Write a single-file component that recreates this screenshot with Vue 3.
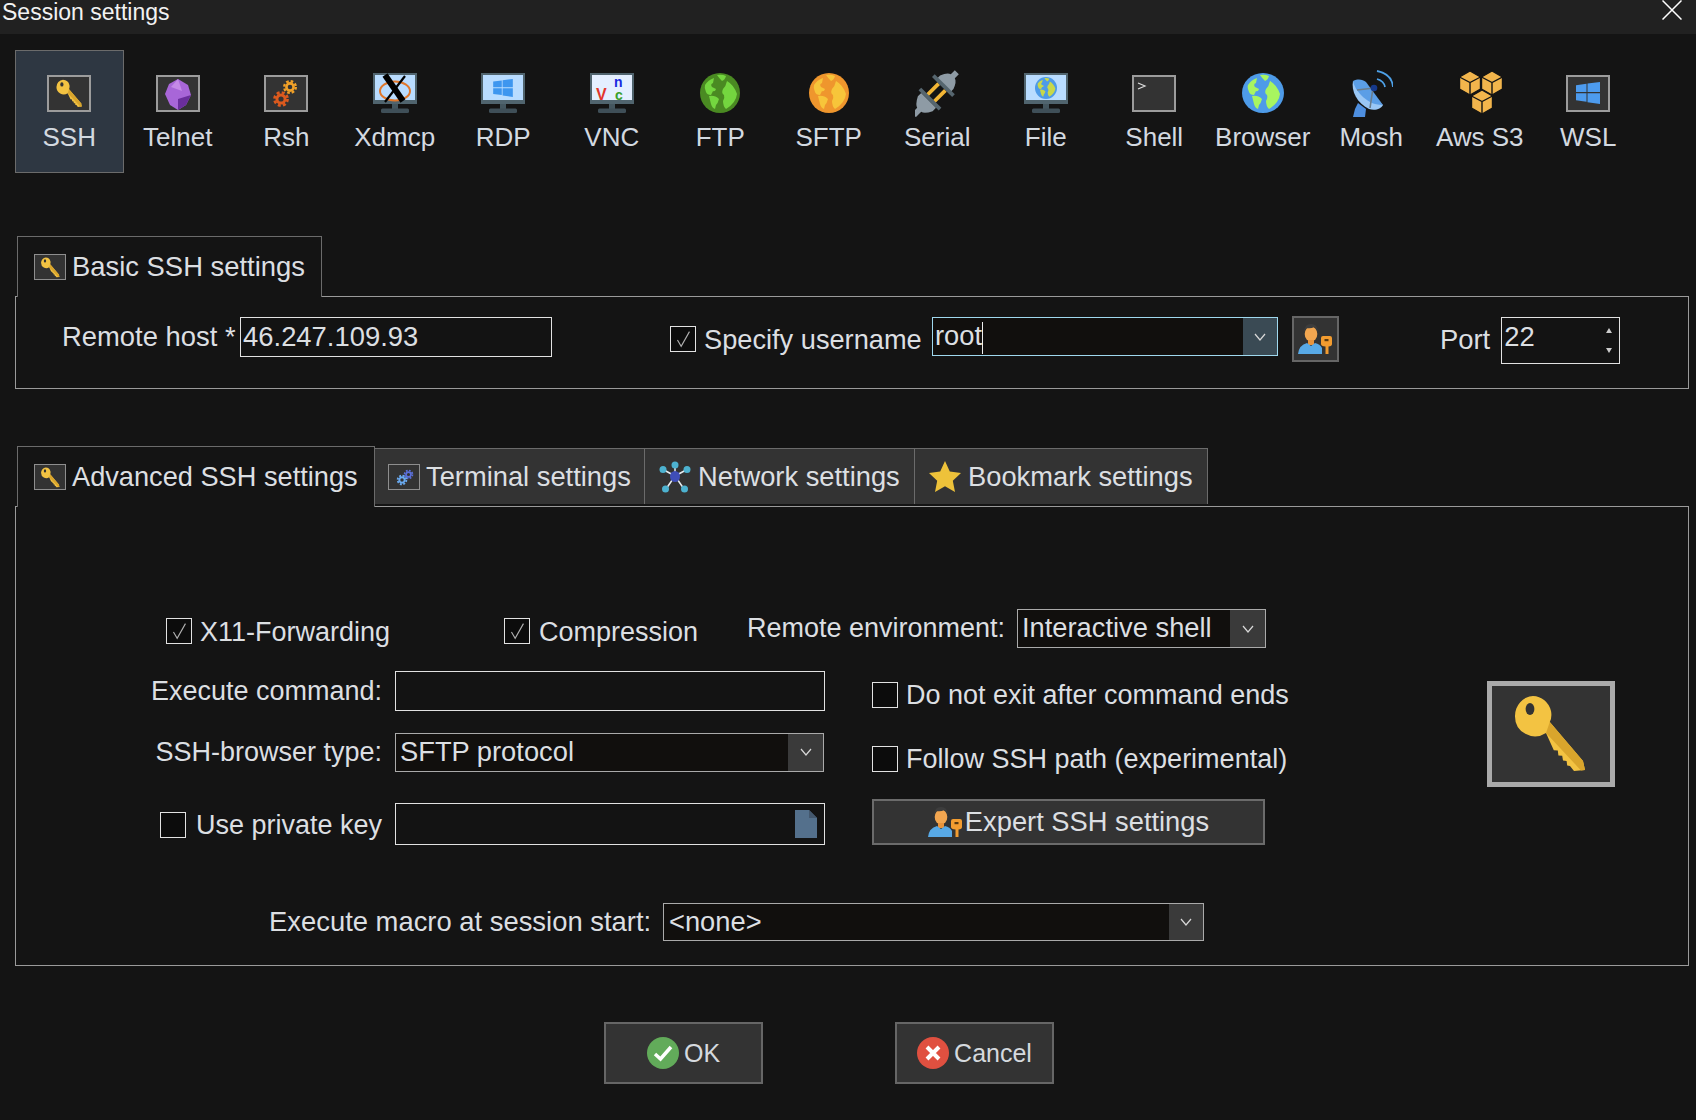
<script setup>
const tiles = [
  { label: 'SSH', icon: 'ssh', active: true },
  { label: 'Telnet', icon: 'telnet' },
  { label: 'Rsh', icon: 'rsh' },
  { label: 'Xdmcp', icon: 'xdmcp' },
  { label: 'RDP', icon: 'rdp' },
  { label: 'VNC', icon: 'vnc' },
  { label: 'FTP', icon: 'ftp' },
  { label: 'SFTP', icon: 'sftp' },
  { label: 'Serial', icon: 'serial' },
  { label: 'File', icon: 'file' },
  { label: 'Shell', icon: 'shell' },
  { label: 'Browser', icon: 'browser' },
  { label: 'Mosh', icon: 'mosh' },
  { label: 'Aws S3', icon: 'aws' },
  { label: 'WSL', icon: 'wsl' }
]
</script>

<template>
  <div class="dialog">
    <!-- shared icon sprites -->
    <svg class="sprite" xmlns="http://www.w3.org/2000/svg">
      <defs>
        <symbol id="key" viewBox="0 0 40 40">
          <path fill="#f3c342" d="M11 1a9.5 10 0 0 1 9 7.5q.6 3-.6 5.5L36 33.5 37 38l-5.5.5-2-2.5-1.4-.2-.3-2.3-1.8-.2-.4-2.4-1.9-.2-.3-2.4-2-.2L17.5 19.500A10 10 0 0 1 2 11 9.5 10 0 0 1 11 1z" />
          <path fill="#d9a52c" d="M19.4 14 36 33.5 37 38l-2 .2L17.5 19.5z" />
          <ellipse cx="9.5" cy="7.5" rx="2.2" ry="3" fill="#333" />
        </symbol>
        <symbol id="person-key" viewBox="0 0 34 30">
          <ellipse cx="13" cy="10" rx="6.3" ry="7.5" fill="#f2a650" />
          <path fill="#3d3d3d" d="M6.500 8Q6 0 13 0q7 0 6.500 8-1-4-3-5-4 2-8 1-1.500 1-2 4z" />
          <path fill="#e8943c" d="M10 16h6v5h-6z" />
          <path fill="#58a9e6" d="M0 30q1-9 9-11l4 3 4-3q5 1 7 5v6z" />
          <path fill="#f29c30" d="M23 14q0-2 2-2h7q2 0 2 2v6q0 2-3.500 2.500V30h-3v-7.500Q23 22 23 20z" />
          <rect x="26.500" y="15" width="4" height="2.200" fill="#5a3a10" />
        </symbol>
        <symbol id="land" viewBox="0 0 40 40">
          <path fill="currentColor" d="M27 8q7 4 10 13-1 9-11 15-3-3-3-8 2-3 1-6-3-2-1-6 3-3 4-8zM17 2q5-1 9 1-1 4-4 5-3-3-5-6zM5 12q3-5 9-7l-1 5q-3 1-1 4l4 2q-1 3-3 2l-2 4q-4 0-5-3-2-4-1-7zM9 23q6-1 10 3-1 4-3 6l-1 4q-3-1-4-5z" />
        </symbol>
        <symbol id="win" viewBox="0 0 24 22">
          <path fill="currentColor" d="M0 3.200 10.500 1.700V10H0zM11.500 1.500 24 0v10H11.500zM0 11.200h10.500v8.500L0 18.300zM11.500 11.200H24V22l-12.500-1.700z" />
        </symbol>
        <symbol id="gear" viewBox="-8 -8 16 16">
          <circle r="3.600" fill="none" stroke="currentColor" stroke-width="2.600" />
          <circle r="5.800" fill="none" stroke="currentColor" stroke-width="2.400" stroke-dasharray="2.600 1.950" />
        </symbol>
        <symbol id="cube" viewBox="-12 -13 24 26">
          <path fill="#f2b54c" stroke="#141414" stroke-width="1.400" stroke-linejoin="round" d="M0-12 10.500-6V6L0 12-10.500 6V-6z" />
          <path fill="none" stroke="#141414" stroke-width="1.400" d="M-10.500-6 0-.5 10.500-6M0-.5V12" />
        </symbol>
        <symbol id="monitor" viewBox="0 0 44 40">
          <rect x="1" y="1" width="42" height="29" fill="#b9dcff" stroke="#50646e" stroke-width="2" />
          <rect x="0" y="27" width="44" height="4" fill="#50646e" />
          <rect x="19" y="31" width="6" height="5" fill="#44565f" />
          <rect x="8" y="35.500" width="28" height="4.500" rx="1.500" fill="#3f4f58" />
        </symbol>
        <symbol id="frame" viewBox="0 0 44 40">
          <rect x="1" y="3" width="42" height="35" fill="#333" stroke="#9c9c9c" stroke-width="2" />
        </symbol>

        <symbol id="i-ssh" viewBox="0 -4 44 48">
          <use href="#frame" width="44" height="40" />
          <use href="#key" x="8" y="6" width="29" height="29" />
        </symbol>
        <symbol id="i-telnet" viewBox="0 -4 44 48">
          <use href="#frame" width="44" height="40" />
          <path fill="#a866d8" d="M22 6l10 6 3 10-5 10-8 5-8-5-5-11 4-10z" />
          <path fill="#6a2e9c" d="M22 26l13-4-5 10-8 5z" />
          <path fill="#c58ae8" d="M22 6l4 12-11-4z" />
        </symbol>
        <symbol id="i-rsh" viewBox="0 -4 44 48">
          <use href="#frame" width="44" height="40" />
          <use href="#gear" x="18" y="6" width="16" height="16" color="#f0a028" />
          <use href="#gear" x="8" y="17" width="18" height="18" color="#dc5a1e" />
        </symbol>
        <symbol id="i-xdmcp" viewBox="0 -4 44 48">
          <use href="#monitor" width="44" height="40" />
          <ellipse cx="22" cy="18" rx="15" ry="9.500" fill="none" stroke="#e0762a" stroke-width="2" />
          <path stroke="#000" stroke-width="6" d="M12 2 30 28" />
          <path stroke="#000" stroke-width="2.200" d="M32 3 12 29" />
        </symbol>
        <symbol id="i-rdp" viewBox="0 -4 44 48">
          <use href="#monitor" width="44" height="40" />
          <use href="#win" x="12" y="6" width="20" height="18" color="#3e96ef" />
        </symbol>
        <symbol id="i-vnc" viewBox="0 -4 44 48">
          <use href="#monitor" width="44" height="40" />
          <rect x="2" y="2" width="40" height="25" fill="#e4efff" />
          <text x="6" y="27" font-family="Liberation Sans, sans-serif" font-weight="700" font-size="16" fill="#e2352c">V</text>
          <text x="24" y="14" font-family="Liberation Sans, sans-serif" font-weight="700" font-size="14" fill="#1a2ae0">n</text>
          <text x="25" y="27" font-family="Liberation Sans, sans-serif" font-weight="700" font-size="14" fill="#3aa02c">c</text>
        </symbol>
        <symbol id="i-ftp" viewBox="0 -4 44 48">
          <ellipse cx="22" cy="20" rx="20" ry="20" fill="#4a8a22" />
          <use href="#land" x="2" y="0" width="40" height="40" color="#74d63f" />
        </symbol>
        <symbol id="i-sftp" viewBox="0 -4 44 48">
          <ellipse cx="22" cy="20" rx="20" ry="20" fill="#ef962d" />
          <use href="#land" x="2" y="0" width="40" height="40" color="#f7c53a" />
        </symbol>
        <symbol id="i-serial" viewBox="0 -4 44 48">
          <g transform="translate(21 20) rotate(45) scale(.95)">
            <path fill="#f2b535" d="M-7-9h4V8h-4zM3-9h4V8H3z" />
            <path fill="#8e9ba5" d="M-10-12v-4q3-8 7-9v-6h6v6q4 1 7 9v4z" />
            <rect x="-15" y="-13" width="30" height="4" fill="#56666f" />
            <path fill="#8e9ba5" d="M-11 11v5q4 8 8 9v8h6v-8q4-1 8-9v-5z" />
            <rect x="-15" y="7" width="30" height="4" fill="#56666f" />
          </g>
        </symbol>
        <symbol id="i-file" viewBox="0 -4 44 48">
          <use href="#monitor" width="44" height="40" />
          <circle cx="22" cy="15" r="11" fill="#4e9be8" />
          <use href="#land" x="11" y="4" width="22" height="22" color="#c8d84a" />
        </symbol>
        <symbol id="i-shell" viewBox="0 -4 44 48">
          <use href="#frame" width="44" height="40" />
          <path fill="none" stroke="#ddd" stroke-width="1.200" d="M6 10l7 3-7 3" />
        </symbol>
        <symbol id="i-browser" viewBox="0 -4 44 48">
          <ellipse cx="22" cy="20" rx="21" ry="20" fill="#4e9be8" />
          <use href="#land" x="1" y="0" width="42" height="40" color="#a8f560" />
        </symbol>
        <symbol id="i-mosh" viewBox="0 -4 44 48">
          <path fill="#4e8fe0" d="M9 30l8 6-1 8H4l2-8z" />
          <path fill="#9ac7f5" d="M4 8C2 18 8 30 20 36c6 2 12 0 14-4z" />
          <path fill="#5b9ee6" d="M4 8c6-3 10-1 13 1l17 23c-10 0-16-4-22-10-4-4-7-9-8-14z" />
          <path fill="none" stroke="#6b7d8c" stroke-width="1.600" d="M8 17 25 15M24 15 21 35" />
          <circle cx="25" cy="15" r="3.300" fill="#16398c" />
          <path fill="none" stroke="#4ea1e8" stroke-width="1.800" d="M28 6q7 2 8 8M28-2q15 3 16 16" />
        </symbol>
        <symbol id="i-aws" viewBox="0 -4 44 48">
          <use href="#cube" x="0" y="-3" width="24" height="26" />
          <use href="#cube" x="22" y="-3" width="24" height="26" />
          <use href="#cube" x="12" y="16" width="24" height="26" />
        </symbol>
        <symbol id="i-wsl" viewBox="0 -4 44 48">
          <use href="#frame" width="44" height="40" />
          <use href="#win" x="10" y="9" width="24" height="22" color="#4d9bee" />
        </symbol>
      </defs>
    </svg>

    <div class="titlebar">
      <span class="title">Session settings</span>
      <svg class="close" viewBox="0 0 20 20" width="20" height="20">
        <path d="M.5.500 19.500 19.500M19.500.500.500 19.500" stroke="#fff" stroke-width="1.500" />
      </svg>
    </div>

    <div class="tiles">
      <div v-for="t in tiles" :key="t.label" :class="['tile', { active: t.active }]">
        <svg class="tile-icon" width="44" height="48"><use :href="'#i-' + t.icon" width="44" height="48" /></svg>
        <span>{{ t.label }}</span>
      </div>
    </div>

    <div class="tabs basic-tabs">
      <div class="tab selected">
        <span class="tab-frame"><svg width="21" height="21"><use href="#key" width="21" height="21" /></svg></span>
        Basic SSH settings
      </div>
    </div>
    <div class="panel basic-panel">
      <label class="lbl host-lbl">Remote host *</label>
      <input class="field host" value="46.247.109.93" />
      <span class="check user-check"><svg viewBox="0 0 26 26"><path d="M7 14l4 7L20 5" /></svg></span>
      <label class="lbl user-lbl">Specify username</label>
      <div class="combo user-combo">
        <span class="combo-val">root<i class="caret"></i></span>
        <span class="combo-btn"><svg width="12" height="8" viewBox="0 0 12 8"><path d="M1 1l5 6 5-6" /></svg></span>
      </div>
      <button class="user-btn"><svg width="34" height="30"><use href="#person-key" width="34" height="30" /></svg></button>
      <label class="lbl port-lbl">Port</label>
      <div class="port">
        <span>22</span>
        <span class="spin"><i class="up"></i><i class="down"></i></span>
      </div>
    </div>

    <div class="tabs adv-tabs">
      <div class="tab selected">
        <span class="tab-frame"><svg width="21" height="21"><use href="#key" width="21" height="21" /></svg></span>
        Advanced SSH settings
      </div>
      <div class="tab plain term-tab">
        <span class="tab-frame">
          <svg width="24" height="20" viewBox="0 0 24 20">
            <use href="#gear" x="11" y="2" width="11" height="11" color="#5b6fd8" />
            <use href="#gear" x="4" y="7" width="12" height="12" color="#6aaaf0" />
          </svg>
        </span>
        Terminal settings
      </div>
      <div class="tab plain net-tab">
        <svg width="32" height="32" viewBox="0 0 32 32">
          <path stroke="#e8eef2" stroke-width="1.500" d="M16 15 16 5M16 15 5 9M16 15 27 9M16 15 7 28M16 15 25 28" />
          <circle cx="16" cy="4" r="3.500" fill="#4db2d0" />
          <circle cx="4" cy="8.500" r="3.500" fill="#4db2d0" />
          <circle cx="28" cy="8.500" r="3.500" fill="#4db2d0" />
          <circle cx="6.500" cy="28" r="3.500" fill="#4db2d0" />
          <circle cx="25.500" cy="28" r="3.500" fill="#4db2d0" />
          <ellipse cx="16" cy="15.500" rx="5" ry="5.500" fill="#3f4eb8" />
        </svg>
        Network settings
      </div>
      <div class="tab plain mark-tab">
        <svg width="32" height="31" viewBox="0 0 32 31">
          <path fill="#eec23a" d="M16 0l4.800 10.500L32 12l-8.200 7.800L26 31l-10-5.800L6 31l2.200-11.200L0 12l11.200-1.500z" />
        </svg>
        Bookmark settings
      </div>
    </div>
    <div class="panel adv-panel">
      <div class="adv-top">
        <span class="check x11-check"><svg viewBox="0 0 26 26"><path d="M7 14l4 7L20 5" /></svg></span>
        <label class="lbl x11-lbl">X11-Forwarding</label>
        <span class="check comp-check"><svg viewBox="0 0 26 26"><path d="M7 14l4 7L20 5" /></svg></span>
        <label class="lbl comp-lbl">Compression</label>
        <label class="lbl env-lbl">Remote environment:</label>
        <div class="combo env-combo">
          <span class="combo-val">Interactive shell</span>
          <span class="combo-btn"><svg width="12" height="8" viewBox="0 0 12 8"><path d="M1 1l5 6 5-6" /></svg></span>
        </div>
      </div>

      <div class="adv-mid">
        <div class="left-col">
          <div class="frow exec-row">
            <label class="lbl">Execute command:</label>
            <input class="field wide" value="" />
          </div>
          <div class="frow browser-row">
            <label class="lbl">SSH-browser type:</label>
            <div class="combo browser-combo">
              <span class="combo-val">SFTP protocol</span>
              <span class="combo-btn"><svg width="12" height="8" viewBox="0 0 12 8"><path d="M1 1l5 6 5-6" /></svg></span>
            </div>
          </div>
          <div class="frow key-row">
            <div class="key-lbl">
              <span class="check"></span>
              <label class="lbl">Use private key</label>
            </div>
            <div class="field wide key-field">
              <svg width="22" height="28" viewBox="0 0 22 28">
                <path fill="#54708c" d="M0 0h14l8 8v20H0z" />
                <path fill="#44586e" d="M14 0l8 8h-8z" />
              </svg>
            </div>
          </div>
        </div>

        <div class="right-col">
          <div class="chk-row">
            <span class="check"></span>
            <label class="lbl">Do not exit after command ends</label>
          </div>
          <div class="chk-row follow">
            <span class="check"></span>
            <label class="lbl">Follow SSH path (experimental)</label>
          </div>
          <button class="expert">
            <svg width="34" height="30"><use href="#person-key" width="34" height="30" /></svg>
            Expert SSH settings
          </button>
        </div>

        <div class="big-key">
          <svg width="80" height="80"><use href="#key" width="80" height="80" /></svg>
        </div>
      </div>

      <div class="adv-macro">
        <label class="lbl macro-lbl">Execute macro at session start:</label>
        <div class="combo macro-combo">
          <span class="combo-val">&lt;none&gt;</span>
          <span class="combo-btn"><svg width="12" height="8" viewBox="0 0 12 8"><path d="M1 1l5 6 5-6" /></svg></span>
        </div>
      </div>
    </div>

    <div class="actions">
      <button class="action">
        <svg width="32" height="32" viewBox="0 0 32 32">
          <circle cx="16" cy="16" r="16" fill="#62ab5a" />
          <path d="M8 17l5.500 5L24 10" fill="none" stroke="#fff" stroke-width="3.500" />
        </svg>
        OK
      </button>
      <button class="action cancel">
        <svg width="32" height="32" viewBox="0 0 32 32">
          <circle cx="16" cy="16" r="16" fill="#e05040" />
          <path d="M10 10l12 12M22 10 10 22" fill="none" stroke="#fff" stroke-width="4" />
        </svg>
        Cancel
      </button>
    </div>
  </div>
</template>

<style>
html,
body {
  margin: 0;
  background: #141414;
}
</style>

<style scoped>
.dialog {
  width: 1696px;
  height: 1120px;
  overflow: hidden;
  display: flex;
  flex-direction: column;
  background: #141414;
  color: #dcdfe2;
  font-family: "Liberation Sans", Arial, sans-serif;
  font-size: 27px;
}

.sprite {
  display: none;
}

.titlebar {
  height: 34px;
  flex: none;
  display: flex;
  justify-content: space-between;
  padding: 0 14px 0 2px;
  background: #212121;
}

.title {
  font-size: 23px;
  line-height: 24px;
  color: #f2f2f2;
}

.close {
  display: block;
}

.tiles {
  display: grid;
  grid-template-columns: repeat(15, 108.5px);
  padding: 16px 0 0 15px;
  flex: none;
}

.tile {
  height: 123px;
  box-sizing: border-box;
  padding-top: 18px;
  display: flex;
  flex-direction: column;
  align-items: center;
  border: 1px solid transparent;
  font-size: 26px;
  line-height: 30px;
  color: #d3d9e0;
  white-space: nowrap;
}

.tile.active {
  background: #2e3742;
  border-color: #6b6b6b;
}

.tile-icon {
  display: block;
  flex: none;
  margin-bottom: 5px;
}

.tabs {
  display: flex;
  flex: none;
  padding-left: 17px;
  position: relative;
  z-index: 1;
  font-size: 27.4px;
}

.basic-tabs {
  margin-top: 63px;
}

.adv-tabs {
  margin-top: 57px;
  align-items: flex-start;
}

.tab {
  box-sizing: border-box;
  display: flex;
  align-items: center;
  gap: 6px;
  white-space: nowrap;
}

.tab.selected {
  height: 61px;
  padding: 0 16px;
  background: #141414;
  border: 1px solid #6b6b6b;
  border-bottom: none;
  margin-bottom: -1px;
}

.basic-tabs .tab {
  width: 305px;
}

.adv-tabs .tab.selected {
  width: 358px;
  font-size: 27.2px;
}

.tab.plain {
  height: 56px;
  margin-top: 2px;
  background: #333;
  border: 1px solid #6b6b6b;
  border-bottom: none;
  border-left: none;
  font-size: 27.3px;
}

.term-tab {
  width: 270px;
  padding-left: 13px;
}

.net-tab {
  width: 270px;
  padding-left: 14px;
  gap: 7px;
}

.mark-tab {
  width: 293px;
  padding-left: 14px;
  gap: 7px;
}

.tab-frame {
  width: 32px;
  height: 26px;
  box-sizing: border-box;
  flex: none;
  display: flex;
  align-items: center;
  justify-content: center;
  background: #333;
  border: 1.5px solid #8e8e8e;
}

.panel {
  width: 1674px;
  margin-left: 15px;
  box-sizing: border-box;
  flex: none;
  border: 1px solid #9a9a9a;
}

.basic-panel {
  height: 93px;
  display: flex;
  align-items: flex-start;
  padding: 20px 0 0 46px;
  font-size: 27.4px;
}

.lbl {
  line-height: 40px;
  white-space: nowrap;
}

.field {
  box-sizing: border-box;
  height: 40px;
  margin: 0;
  padding: 0 2px;
  background: #131313;
  border: 1.5px solid #e2e2e2;
  color: #dcdfe2;
  font: inherit;
  outline: none;
}

.host {
  width: 312px;
  margin-left: 4.5px;
}

.check {
  width: 26px;
  height: 26px;
  flex: none;
  box-sizing: border-box;
  display: block;
  background: #0c0c0c;
  border: 1.5px solid #e2e2e2;
}

.check svg {
  display: block;
  width: 100%;
  height: 100%;
}

.check path {
  fill: none;
  stroke: #b0b0b0;
  stroke-width: 1.2;
}

.user-check {
  margin: 9px 0 0 118px;
}

.user-lbl {
  margin: 3px 0 0 8px;
  font-size: 27.2px;
}

.combo {
  box-sizing: border-box;
  display: flex;
  background: #110f0d;
  border: 1px solid #aaa;
  font-size: 27.3px;
}

.combo-val {
  flex: 1;
  padding-left: 4px;
  line-height: 36px;
  white-space: nowrap;
}

.combo-btn {
  flex: none;
  display: flex;
  align-items: center;
  justify-content: center;
  background: #3a3a3a;
}

.combo-btn path {
  fill: none;
  stroke: #d8d8d8;
  stroke-width: 1.2;
}

.user-combo {
  width: 346px;
  height: 39px;
  margin-left: 10.3px;
  border-color: #9fd8ee;
}

.user-combo .combo-val {
  padding-left: 2px;
}

.user-combo .combo-btn {
  width: 34px;
  background: #3a4a54;
}

.caret {
  display: inline-block;
  width: 1px;
  height: 32px;
  background: #eee;
  vertical-align: middle;
}

.user-btn {
  width: 47px;
  height: 46px;
  margin: -1px 0 0 14px;
  padding: 0;
  display: flex;
  align-items: center;
  justify-content: center;
  background: #333;
  border: 2.5px solid #666;
}

.port-lbl {
  margin: 3px 0 0 101px;
}

.port {
  width: 119px;
  height: 47px;
  margin-left: 11px;
  box-sizing: border-box;
  display: flex;
  justify-content: space-between;
  padding: 0 7px 0 2px;
  line-height: 37px;
  background: #131313;
  border: 1.5px solid #e2e2e2;
}

.spin {
  display: flex;
  flex-direction: column;
  justify-content: space-between;
  padding: 10px 0;
}

.spin i {
  width: 0;
  height: 0;
  border-left: 3.5px solid transparent;
  border-right: 3.5px solid transparent;
}

.spin .up {
  border-bottom: 5px solid #ccc;
}

.spin .down {
  border-top: 5px solid #ccc;
}

.adv-panel {
  height: 460px;
  display: flex;
  flex-direction: column;
  padding: 102px 0 0 0;
}

.adv-top {
  display: flex;
  align-items: flex-start;
  padding-left: 150px;
  height: 39px;
}

.x11-check {
  margin-top: 9px;
}

.x11-lbl {
  margin: 3px 0 0 8px;
  width: 304px;
}

.comp-check {
  margin: 9px 0 0 0;
}

.comp-lbl {
  margin: 3px 0 0 9px;
  width: 208px;
}

.env-lbl {
  width: 270px;
  margin-top: -1px;
}

.env-combo {
  width: 249px;
  height: 39px;
}

.env-combo .combo-btn {
  width: 35px;
}

.adv-mid {
  display: flex;
  align-items: flex-start;
  margin-top: 23px;
}

.left-col {
  width: 809px;
  flex: none;
}

.frow {
  display: flex;
  align-items: center;
  gap: 13px;
}

.frow > .lbl,
.key-lbl {
  width: 366px;
  flex: none;
  text-align: right;
}

.wide {
  width: 430px;
}

.browser-row {
  margin-top: 21px;
}

.browser-combo {
  width: 429px;
  height: 39px;
}

.browser-combo .combo-btn {
  width: 35px;
}

.key-row {
  margin-top: 31px;
}

.key-lbl {
  display: flex;
  align-items: center;
  justify-content: flex-end;
  gap: 10px;
  padding-top: 2px;
}

.key-field {
  height: 42px;
  display: flex;
  align-items: center;
  justify-content: flex-end;
  padding-right: 7px;
}

.right-col {
  width: 393px;
  margin-left: 47px;
  flex: none;
  padding-top: 11px;
}

.chk-row {
  display: flex;
  align-items: center;
  gap: 8px;
  height: 26px;
  white-space: nowrap;
}

.follow {
  margin-top: 38px;
}

.expert {
  width: 393px;
  height: 46px;
  margin-top: 27px;
  box-sizing: border-box;
  display: flex;
  align-items: center;
  justify-content: center;
  gap: 3px;
  padding: 0;
  background: #333;
  border: 2px solid #6b6b6b;
  color: #dcdfe2;
  font: inherit;
  font-size: 27.3px;
}

.big-key {
  width: 128px;
  height: 106px;
  margin: 10px 0 0 222px;
  box-sizing: border-box;
  flex: none;
  display: flex;
  align-items: center;
  justify-content: center;
  background: #333;
  border: 5px solid #aaa;
}

.adv-macro {
  display: flex;
  align-items: center;
  gap: 14px;
  margin-top: 57px;
  padding-left: 253px;
}

.macro-lbl {
  width: 380px;
  font-size: 27.4px;
}

.macro-combo {
  width: 541px;
  height: 38px;
}

.macro-combo .combo-val {
  padding-left: 5px;
}

.macro-combo .combo-btn {
  width: 34px;
}

.actions {
  display: flex;
  flex: none;
  gap: 132px;
  margin-top: 56px;
  padding-left: 604px;
}

.action {
  width: 159px;
  height: 62px;
  box-sizing: border-box;
  display: flex;
  align-items: center;
  justify-content: center;
  gap: 5px;
  padding: 0;
  background: #333;
  border: 2.5px solid #666;
  color: #d5d9de;
  font: inherit;
  font-size: 25px;
}
</style>
